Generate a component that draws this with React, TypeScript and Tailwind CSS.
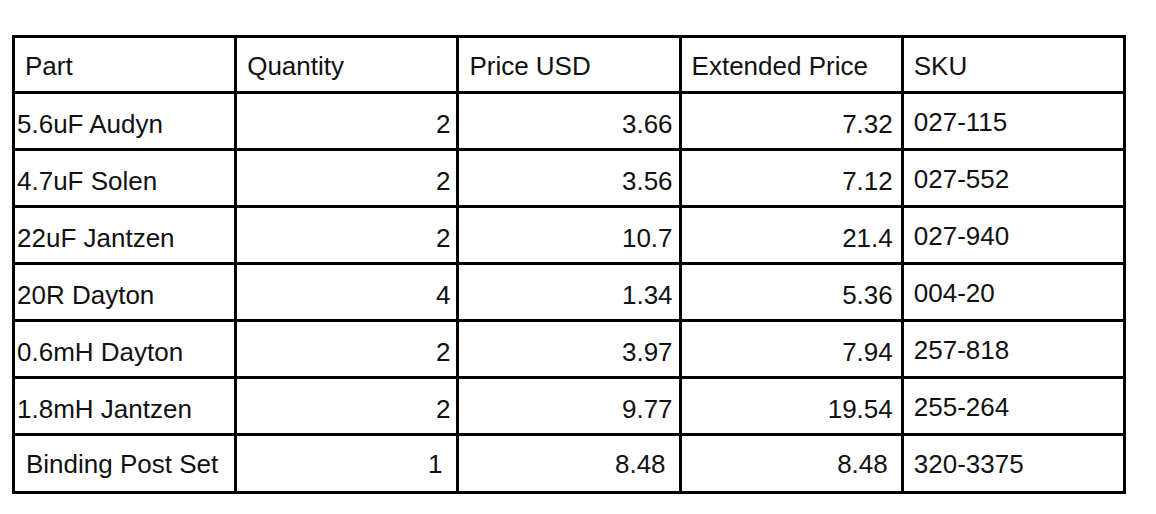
type Row = { part: string; qty: string; price: string; ext: string; sku: string };

const rows: Row[] = [
  { part: '5.6uF Audyn', qty: '2', price: '3.66', ext: '7.32', sku: '027-115' },
  { part: '4.7uF Solen', qty: '2', price: '3.56', ext: '7.12', sku: '027-552' },
  { part: '22uF Jantzen', qty: '2', price: '10.7', ext: '21.4', sku: '027-940' },
  { part: '20R Dayton', qty: '4', price: '1.34', ext: '5.36', sku: '004-20' },
  { part: '0.6mH Dayton', qty: '2', price: '3.97', ext: '7.94', sku: '257-818' },
  { part: '1.8mH Jantzen', qty: '2', price: '9.77', ext: '19.54', sku: '255-264' },
];

const headers = ['Part', 'Quantity', 'Price USD', 'Extended Price', 'SKU'];

export default function App() {
  return (
    <div className="w-[1156px] h-[514px] bg-white pt-[35px] pl-3 font-['Liberation_Sans',Arial,sans-serif] text-[26px] leading-none text-[#111]">
      <table className="w-[1114px] table-fixed border-collapse border-[3px] border-black">
        <thead>
          <tr className="h-[56px]">
            {headers.map((h) => (
              <th
                key={h}
                className="border-[3px] border-black align-bottom pl-[10px] pb-[12px] text-left font-normal"
              >
                {h}
              </th>
            ))}
          </tr>
        </thead>
        <tbody>
          {rows.map((r) => (
            <tr key={r.sku} className="h-[57px]">
              {/* data rows sit a little low in the cells */}
              <td className="border-[3px] border-black align-bottom pl-[2px] pb-[11px]">{r.part}</td>
              <td className="border-[3px] border-black align-bottom pr-[6px] pb-[11px] text-right">{r.qty}</td>
              <td className="border-[3px] border-black align-bottom pr-[6px] pb-[11px] text-right">{r.price}</td>
              <td className="border-[3px] border-black align-bottom pr-[8px] pb-[11px] text-right">{r.ext}</td>
              <td className="border-[3px] border-black align-bottom pl-[10px] pb-[13px]">{r.sku}</td>
            </tr>
          ))}
          <tr className="h-[58px]">
            <td className="border-[3px] border-black align-middle pl-[11px]">Binding Post Set</td>
            <td className="border-[3px] border-black align-middle pr-[14px] text-right">1</td>
            <td className="border-[3px] border-black align-middle pr-[13px] text-right">8.48</td>
            <td className="border-[3px] border-black align-middle pr-[13px] text-right">8.48</td>
            <td className="border-[3px] border-black align-middle pl-[10px]">320-3375</td>
          </tr>
        </tbody>
      </table>
    </div>
  );
}
